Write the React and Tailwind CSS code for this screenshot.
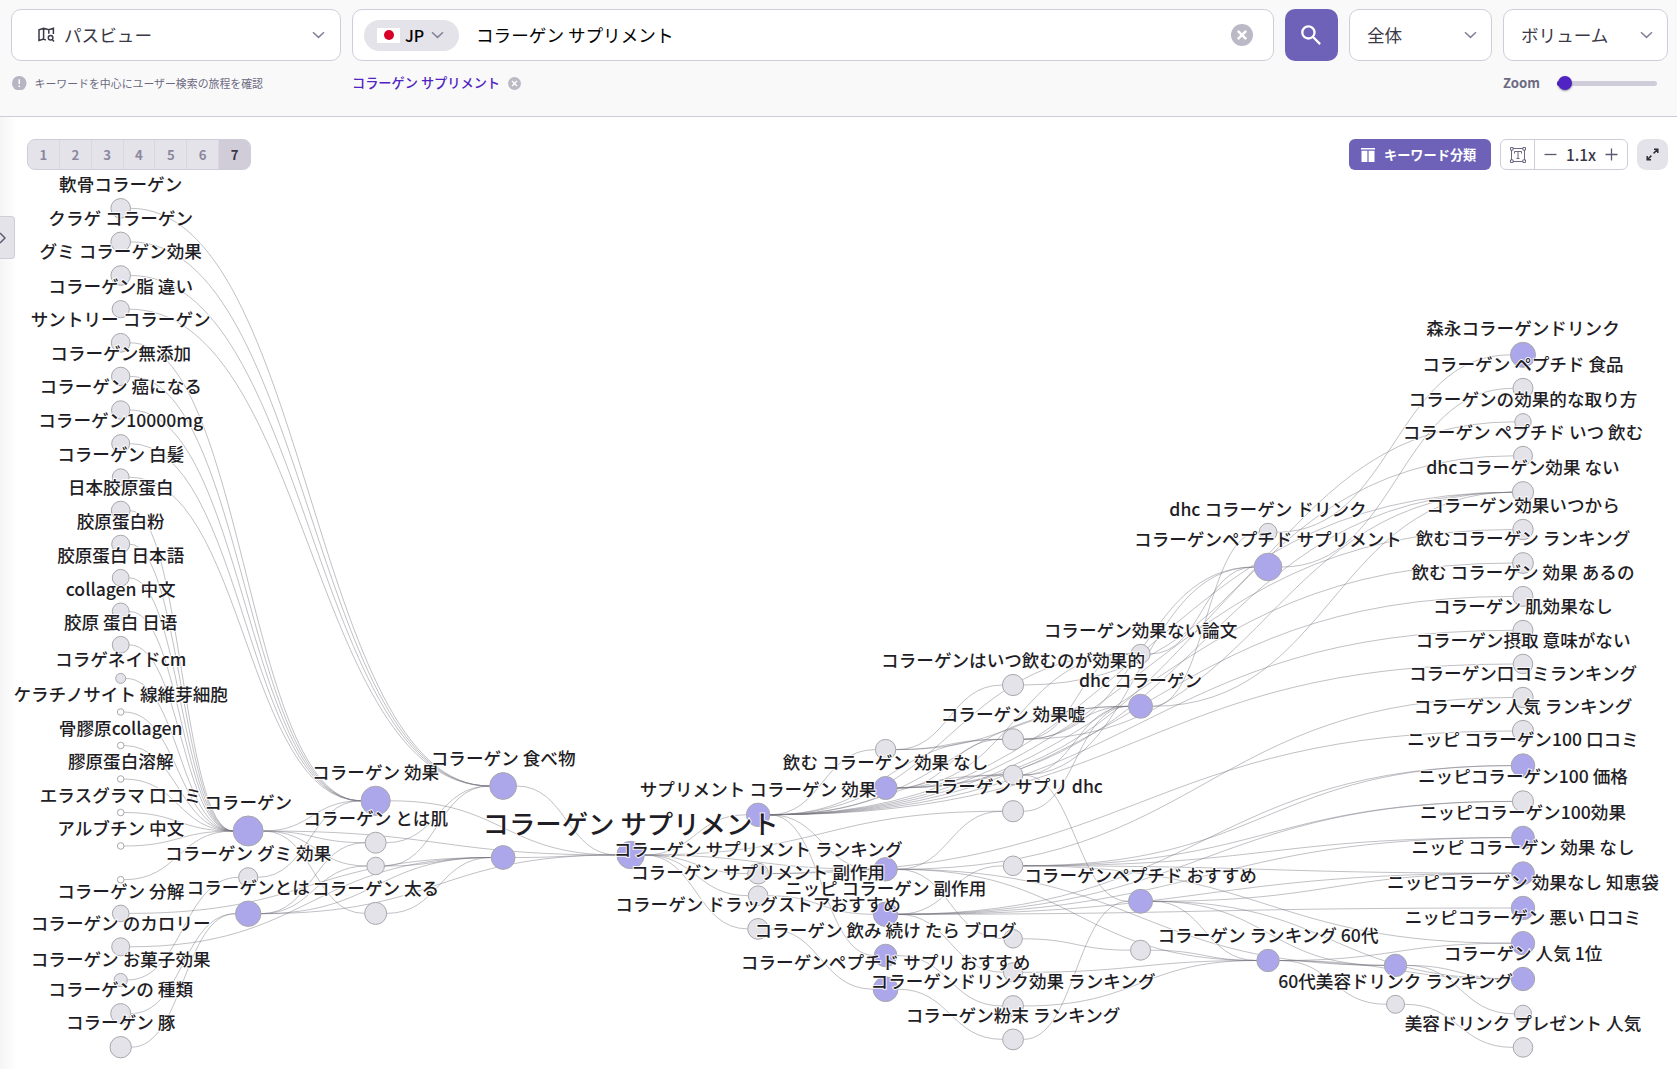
import React from "react";

const COL0 = 120.7;
const STEP = 127.48;
const colX = (c) => COL0 + STEP * c;

// id, column, y, radius, kind (g: gray, p: purple, w: hollow), label
const nodes = [
  ["a0", 0, 208.3, 9.8, "g", "軟骨コラーゲン"],
  ["a1", 0, 241.9, 9.8, "g", "クラゲ コラーゲン"],
  ["a2", 0, 275.5, 9.8, "g", "グミ コラーゲン効果"],
  ["a3", 0, 309.2, 8.6, "g", "コラーゲン脂 違い"],
  ["a4", 0, 342.8, 9.4, "g", "サントリー コラーゲン"],
  ["a5", 0, 376.4, 9.2, "g", "コラーゲン無添加"],
  ["a6", 0, 410, 9.2, "g", "コラーゲン 癌になる"],
  ["a7", 0, 443.6, 9, "g", "コラーゲン10000mg"],
  ["a8", 0, 477.2, 8.4, "g", "コラーゲン 白髪"],
  ["a9", 0, 510.6, 9.4, "g", "日本胶原蛋白"],
  ["a10", 0, 544.2, 9, "g", "胶原蛋白粉"],
  ["a11", 0, 577.8, 8.4, "g", "胶原蛋白 日本語"],
  ["a12", 0, 611.4, 8.4, "g", "collagen 中文"],
  ["a13", 0, 644.8, 8.4, "g", "胶原 蛋白 日语"],
  ["a14", 0, 678.4, 5, "g", "コラゲネイドcm"],
  ["a15", 0, 712, 3.3, "w", "ケラチノサイト 線維芽細胞"],
  ["a16", 0, 745.5, 3.3, "w", "骨膠原collagen"],
  ["a17", 0, 779, 3.3, "w", "膠原蛋白溶解"],
  ["a18", 0, 812.5, 3.3, "w", "エラスグラマ 口コミ"],
  ["a19", 0, 846, 3.3, "w", "アルブチン 中文"],
  ["a20", 0, 879.7, 3.3, "w"],
  ["a21", 0, 913.4, 8.3, "g", "コラーゲン 分解"],
  ["a22", 0, 946.8, 9, "g", "コラーゲン のカロリー"],
  ["a23", 0, 980, 6.6, "g", "コラーゲン お菓子効果"],
  ["a24", 0, 1013.6, 10, "g", "コラーゲンの 種類"],
  ["a25", 0, 1047.2, 10.7, "g", "コラーゲン 豚"],

  ["b0", 1, 831, 15, "p", "コラーゲン"],
  ["b1", 1, 877.3, 9.6, "g", "コラーゲン グミ 効果"],
  ["b2", 1, 913.7, 12.7, "p", "コラーゲンとは"],

  ["c0", 2, 800.8, 14.6, "p", "コラーゲン 効果"],
  ["c1", 2, 842.7, 10.5, "g", "コラーゲン とは肌"],
  ["c2", 2, 866, 8.8, "g"],
  ["c3", 2, 913.4, 11, "g", "コラーゲン 太る"],

  ["d0", 3, 786, 13.4, "p", "コラーゲン 食べ物"],
  ["d1", 3, 857.5, 11.9, "p"],

  ["e0", 4, 855, 13.7, "p", "コラーゲン サプリメント", true],

  ["f0", 5, 814.8, 11.7, "p", "サプリメント コラーゲン 効果"],
  ["f1", 5, 873.6, 10.4, "g", "コラーゲン サプリメント ランキング"],
  ["f2", 5, 895.7, 9.8, "g", "コラーゲン サプリメント 副作用"],
  ["f3", 5, 928.9, 10.4, "g", "コラーゲン ドラッグストアおすすめ"],

  ["g0", 6, 749.6, 10.2, "g"],
  ["g1", 6, 788, 11.5, "p", "飲む コラーゲン 効果 なし"],
  ["g2", 6, 869.3, 11.7, "p"],
  ["g3", 6, 914.3, 12.2, "p", "ニッピ コラーゲン 副作用"],
  ["g4", 6, 955.5, 11.3, "p", "コラーゲン 飲み 続け たら ブログ"],
  ["g5", 6, 989.2, 12.4, "p", "コラーゲンペプチド サプリ おすすめ"],

  ["h0", 7, 685, 10.6, "g", "コラーゲンはいつ飲むのが効果的"],
  ["h1", 7, 739.3, 10.6, "g", "コラーゲン 効果嘘"],
  ["h2", 7, 775, 9.8, "g"],
  ["h3", 7, 811.2, 10.6, "g", "コラーゲン サプリ dhc"],
  ["h4", 7, 865.8, 9.8, "g"],
  ["h5", 7, 938.8, 9.3, "g"],
  ["h6", 7, 972.3, 9.6, "g"],
  ["h7", 7, 1006, 10.4, "g", "コラーゲンドリンク効果 ランキング"],
  ["h8", 7, 1039.4, 10.4, "g", "コラーゲン粉末 ランキング"],

  ["i0", 8, 653.9, 9.6, "g", "コラーゲン効果ない論文"],
  ["i1", 8, 706.3, 12, "p", "dhc コラーゲン"],
  ["i2", 8, 901.3, 12, "p", "コラーゲンペプチド おすすめ"],
  ["i3", 8, 950.2, 10, "g"],

  ["j0", 9, 532.2, 8.9, "g", "dhc コラーゲン ドリンク"],
  ["j1", 9, 567, 13.8, "p", "コラーゲンペプチド サプリメント"],
  ["j2", 9, 960.5, 11.2, "p", "コラーゲン ランキング 60代"],

  ["k0", 10, 965.4, 11.2, "p"],
  ["k1", 10, 1004.3, 9, "g", "60代美容ドリンク ランキング"],

  ["l0", 11, 354.8, 12.5, "p", "森永コラーゲンドリンク"],
  ["l1", 11, 388.3, 10, "g", "コラーゲン ペプチド 食品"],
  ["l2", 11, 421.8, 8.2, "g", "コラーゲンの効果的な取り方"],
  ["l3", 11, 455.8, 9.5, "g", "コラーゲン ペプチド いつ 飲む"],
  ["l4", 11, 492.2, 10.6, "g", "dhcコラーゲン効果 ない"],
  ["l5", 11, 529.5, 10.2, "g", "コラーゲン効果いつから"],
  ["l6", 11, 563, 10.4, "g", "飲むコラーゲン ランキング"],
  ["l7", 11, 596.4, 10, "g", "飲む コラーゲン 効果 あるの"],
  ["l8", 11, 630.3, 10, "g", "コラーゲン 肌効果なし"],
  ["l9", 11, 664, 9.8, "g", "コラーゲン摂取 意味がない"],
  ["l10", 11, 697.5, 10.2, "g", "コラーゲン口コミランキング"],
  ["l11", 11, 731, 10.6, "g", "コラーゲン 人気 ランキング"],
  ["l12", 11, 765.6, 11.8, "p", "ニッピ コラーゲン100 口コミ"],
  ["l13", 11, 801.4, 10.6, "g", "ニッピコラーゲン100 価格"],
  ["l14", 11, 837.6, 11.4, "p", "ニッピコラーゲン100効果"],
  ["l15", 11, 873.2, 11.4, "p", "ニッピ コラーゲン 効果 なし"],
  ["l16", 11, 908, 11.7, "p", "ニッピコラーゲン 効果なし 知恵袋"],
  ["l17", 11, 943.2, 11.7, "p", "ニッピコラーゲン 悪い 口コミ"],
  ["l18", 11, 979, 11.7, "p", "コラーゲン 人気 1位"],
  ["l19", 11, 1013.8, 8.6, "g"],
  ["l20", 11, 1047.4, 9.8, "g", "美容ドリンク プレゼント 人気"],
].map(([id, col, y, r, kind, label, main]) => ({ id, x: colX(col), y, r, kind, label, main }));

const byId = Object.fromEntries(nodes.map((n) => [n.id, n]));

const links = [
  ["a0 a1 a2 a3", "d0"],
  ["a4 a5 a6 a7 a8", "c0"],
  ["a9 a10 a11 a12 a13 a14 a15 a16 a17 a18 a19 a20", "b0"],
  ["a21 a22", "d1"],
  ["a23", "b1"],
  ["a24 a25", "b2"],
  ["b0", "c0 c1 c2 c3 e0"],
  ["b1", "c0"],
  ["b2", "c1 c2 d1 e0"],
  ["c0", "e0"],
  ["c1", "d0"],
  ["c2", "d0 d1"],
  ["c3", "d1"],
  ["d0 d1", "e0"],
  ["e0", "f0 f1 f2 f3 g2 h3"],
  ["f0", "g0 g2 g4 h1 h2 i0 i1 l4 l5 l6 l7 l8 l9"],
  ["f1", "l11 g2"],
  ["f2", "g3"],
  ["f3", "g5"],
  ["g0", "h0 h1 i1"],
  ["g1", "h1 h2 i0 l3 l4"],
  ["g2", "h3 h5 j2 k0 l10"],
  ["g3", "h4 h6 l12 l13 l14 l15 l16"],
  ["g4", "h7"],
  ["g5", "h8"],
  ["h0", "l2"],
  ["h1", "i0 i1 j1 l4"],
  ["h2", "i1 i2 j1"],
  ["h3", "i1"],
  ["h4", "l12 l13 l14 l15 l17"],
  ["h5", "i3"],
  ["h6 h7", "j2"],
  ["h8", "i2"],
  ["i0", "j1"],
  ["i1", "j0 l4"],
  ["i2", "j2 k0 l15 l18"],
  ["i3", "j2"],
  ["j0", "l0"],
  ["j1", "l1"],
  ["j2", "k0 k1 l17 l18"],
  ["k0", "l18 l19"],
  ["k1", "l20"],
].flatMap(([from, to]) =>
  from.split(" ").flatMap((s) => to.split(" ").map((t) => [byId[s], byId[t]]))
);

const fills = { g: "#e5e3ea", p: "#aca7ea", w: "#ffffff" };

function linkPath([s, t]) {
  const x0 = s.x + s.r;
  const x1 = t.x - t.r;
  const m = (x0 + x1) / 2;
  return `M${x0},${s.y}C${m},${s.y} ${m},${t.y} ${x1},${t.y}`;
}

function Graph() {
  return (
    <svg className="absolute inset-0 h-full w-full" viewBox="0 117 1677 952">
      <g fill="none" stroke="#76747f" strokeOpacity="0.45">
        {links.map((l, i) => (
          <path key={i} d={linkPath(l)} />
        ))}
      </g>
      <g stroke="#a8a7ac">
        {nodes.map((n) => (
          <circle key={n.id} cx={n.x} cy={n.y} r={n.r} fill={fills[n.kind]} />
        ))}
      </g>
      <g fill="#1f1e26" stroke="#ffffff" strokeOpacity="0.85" textAnchor="middle" className="font-medium [paint-order:stroke]">
        {nodes
          .filter((n) => n.label)
          .map((n) => (
            <text
              key={n.id}
              x={n.x}
              y={n.main ? n.y - n.r - 7.3 : n.y - n.r - 7.4}
              strokeWidth="2"
              fontSize={n.main ? 26.4 : 17.6}
            >
              {n.label}
            </text>
          ))}
      </g>
    </svg>
  );
}

function Chevron() {
  return (
    <svg width="13" height="8" viewBox="0 0 13 8" fill="none" stroke="#84809a" strokeWidth="1.5">
      <path d="M1 1.2 6.5 6.4 12 1.2" />
    </svg>
  );
}

function MapIcon() {
  return (
    <svg width="17" height="16" viewBox="0 0 17 16" fill="none" stroke="#3a3847" strokeWidth="1.5">
      <path d="M15.4 7V1.3L10.8 2.700 5.600 1.300 1 2.800v10.600l4.600-1.400 2.200 1M5.600 1.300v10.700M10.800 2.700v4" />
      <circle cx="12.6" cy="10.8" r="2.3" />
      <path d="m14.2 12.600 1.800 2" />
    </svg>
  );
}

function CloseDot({ size }) {
  return (
    <svg width={size} height={size} viewBox="0 0 20 20">
      <circle cx="10" cy="10" r="10" fill="#bcb9c7" />
      <path d="m6.2 6.2 7.6 7.6M13.8 6.2l-7.6 7.6" stroke="#fff" strokeWidth="2.2" />
    </svg>
  );
}

const box = "flex h-[52px] items-center rounded-[10px] border border-[#d0cddb] bg-white";

function Header() {
  return (
    <header className="h-[117px] border-b border-[#d0cddb] bg-[#f9f9f9] pt-[9px] pr-[9px] pl-[11px]">
      <div className="flex gap-[11px]">
        <div className={`${box} w-[330px] pr-[15px] pl-[26px] text-[#3a3847]`}>
          <MapIcon />
          <span className="ml-[9px] flex-1 text-[17.6px]">パスビュー</span>
          <Chevron />
        </div>
        <div className={`${box} flex-1 pr-5 pl-[11px]`}>
          <div className="flex h-[31px] w-[95px] items-center rounded-full bg-[#e5e3ea] pl-[13px]">
            <span className="flex h-[15px] w-[23px] items-center justify-center bg-white">
              <span className="size-[10px] rounded-full bg-[#d80027]" />
            </span>
            <span className="mr-[7px] ml-[5px] text-[16px] font-medium text-black">JP</span>
            <Chevron />
          </div>
          <span className="ml-[17px] flex-1 text-[17.6px] text-black">コラーゲン サプリメント</span>
          <CloseDot size={22} />
        </div>
        <button className="flex h-[52px] w-[53px] items-center justify-center rounded-[10px] bg-[#6d62b8] pr-[2px]">
          <svg width="20" height="20" viewBox="0 0 20 20" fill="none" stroke="#fff" strokeWidth="2.3">
            <circle cx="7.4" cy="7.4" r="6.1" />
            <path d="m11.8 11.8 7.3 7.3" />
          </svg>
        </button>
        <div className={`${box} w-[143px] pr-[14px] pl-[17px] text-[#3a3847]`}>
          <span className="flex-1 text-[17.6px]">全体</span>
          <Chevron />
        </div>
        <div className={`${box} w-[165px] pr-[14px] pl-[17px] text-[#3a3847]`}>
          <span className="flex-1 text-[17.6px]">ボリューム</span>
          <Chevron />
        </div>
      </div>
      <div className="mt-[11px] flex h-[22px] items-center">
        <div className="flex w-[341px] items-center gap-[8px] pl-px">
          <svg width="14.5" height="14.5" viewBox="0 0 15 15">
            <circle cx="7.5" cy="7.5" r="7.5" fill="#b7b4c3" />
            <path d="M7.5 3.4v5M7.5 9.8v1.7" stroke="#fff" strokeWidth="1.6" />
          </svg>
          <span className="text-[10.9px] text-[#6d6982]">キーワードを中心にユーザー検索の旅程を確認</span>
        </div>
        <span className="text-[13.2px] font-medium text-[#5023c3]">コラーゲン サプリメント</span>
        <span className="ml-[8px]">
          <CloseDot size={13} />
        </span>
        <span className="ml-auto text-[13.2px] font-bold text-[#6d6982]">Zoom</span>
        <div className="mr-[11px] ml-[17px] flex h-[5px] w-[100px] items-center rounded-full bg-[#d0cddb]">
          <span className="h-[5px] w-[2px] rounded-l-full bg-[#5023c3]" />
          <span className="-ml-px size-[14px] rounded-full bg-[#5023c3] shadow-[0_1px_2px_rgba(0,0,0,0.4)]" />
        </div>
      </div>
    </header>
  );
}

function Toolbar() {
  return (
    <div className="relative flex h-[31px] items-stretch">
      <div className="flex w-[224px] overflow-hidden rounded-[8px] border border-[#d0cddb] bg-[#e5e3ea] text-[13.2px] font-bold text-[#8b879d]">
        {[1, 2, 3, 4, 5, 6].map((n) => (
          <span key={n} className="flex flex-1 items-center justify-center border-r border-[#d9d7e0]">
            {n}
          </span>
        ))}
        <span className="flex flex-1 items-center justify-center bg-[#d0cdd9] text-[#3a3847]">7</span>
      </div>
      <button className="ml-auto flex w-[142px] items-center rounded-[6px] bg-[#6d62b8] pl-[12px] text-[13.2px] font-bold text-white">
        <svg width="14" height="14" viewBox="0 0 14 14" fill="#fff">
          <path d="M0 0h14v1.6H0zM.5 2.8h5.9V14H.5zM7.6 2.8h5.9V14H7.6z" />
        </svg>
        <span className="ml-[9px]">キーワード分類</span>
      </button>
      <div className="ml-[9px] flex w-[128px] rounded-[6px] border border-[#d0cddb] bg-white">
        <span className="flex w-[34px] items-center justify-center border-r border-[#d0cddb]">
          <svg width="16" height="16" viewBox="0 0 16 16" fill="none" stroke="#6d6982">
            <path d="M3 1.5h10M3 14.5h10M1.5 3v10M14.5 3v10" />
            <path d="M4.500 6.500v-2h7v2M8 4.500v7M6.500 11.500h3" />
            <path d="M.5.5h2.600v2.600H.5zM12.900.5h2.600v2.600h-2.600zM.5 12.900h2.600v2.600H.5zM12.900 12.900h2.600v2.600h-2.600z" fill="#fff" />
          </svg>
        </span>
        <span className="flex flex-1 items-center justify-between px-[9px] text-[15.4px] font-medium text-[#3a3847]">
          <svg width="13" height="13" viewBox="0 0 13 13" stroke="#5c5870" strokeWidth="1.3">
            <path d="M.5 6.500h12" />
          </svg>
          1.1x
          <svg width="13" height="13" viewBox="0 0 13 13" stroke="#5c5870" strokeWidth="1.3">
            <path d="M.5 6.500h12M6.500.5v12" />
          </svg>
        </span>
      </div>
      <button className="ml-[9px] flex w-[31px] items-center justify-center rounded-[9px] bg-[#e5e3ea]">
        <svg width="13" height="13" viewBox="0 0 13 13" fill="none" stroke="#2f2d3a" strokeWidth="1.5">
          <path d="M8 1.200h3.800V5M11.500 1.500 7.600 5.400M1.200 8v3.800H5M1.500 11.500l3.900-3.900" />
        </svg>
      </button>
    </div>
  );
}

export default function App() {
  return (
    <div lang="ja" className="flex h-[1069px] w-[1677px] flex-col overflow-hidden bg-white font-['Noto_Sans_CJK_JP',sans-serif] leading-none">
      <Header />
      <main className="relative flex-1 pt-[22px] pr-[9px] pl-[27px]">
        <div className="absolute inset-y-0 left-0 w-[17px] bg-linear-to-r from-[#f5f5f6] to-white" />
        <Graph />
        <Toolbar />
        <div className="absolute top-[99px] left-0 flex h-[43px] w-[15px] items-center rounded-r-[4px] border border-l-0 border-[#d0cddb] bg-[#e5e3ea]">
          <svg width="6" height="12" viewBox="0 0 6 12" fill="none" stroke="#5c5870" strokeWidth="1.5">
            <path d="M0 1 5 6 0 11" />
          </svg>
        </div>
      </main>
    </div>
  );
}
